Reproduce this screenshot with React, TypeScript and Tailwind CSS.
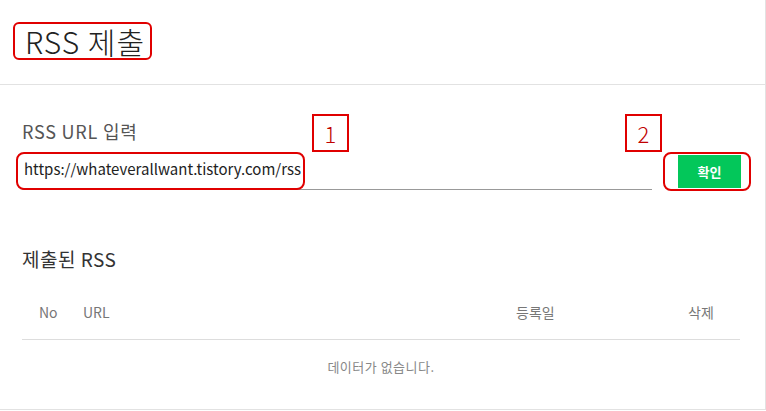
import React from 'react'

const font = "font-['Noto_Sans_CJK_KR','Noto_Sans',sans-serif]"

function Marker({ n, className }: { n: string; className: string }) {
  return (
    <div className={`absolute w-[37px] h-[38px] border-2 border-[#e00000] flex items-center justify-center text-[22px] font-light text-[#c00000] ${className}`}>
      {n}
    </div>
  )
}

export default function App() {
  return (
    <div className={`w-[766px] h-[411px] bg-white ${font}`}>
      <div className="relative h-[410px] border-r border-b border-[#e2e2e2]">
        {/* header */}
        <div className="h-[85px] border-b border-[#e2e2e2] pl-[13px] pt-[22px]">
          <span className="inline-flex items-center h-[38px] pl-[10px] pr-[5px] border-2 border-[#e00000] rounded-[6px] text-[30px] font-light text-[#222] tracking-[1px]">
            RSS 제출
          </span>
        </div>

        {/* form */}
        <div className="px-[22px] pt-[33px]">
          <div className="text-[18px] text-[#555] leading-[26px] tracking-[0.8px]">RSS URL 입력</div>
          <div className="flex items-end mt-[8px]">
            <div className="shrink-0 w-[630px] h-[32px] border-b border-[#999] relative">
              <span className="absolute -left-[6px] -top-[6px] h-[38px] w-[289px] border-2 border-[#e00000] rounded-[8px]" />
              <span className="absolute left-[2px] top-[1px] text-[15px] text-[#222] leading-[20px]">
                https://whateverallwant.tistory.com/rss
              </span>
            </div>
            <div className="shrink-0 ml-[11px] -mb-[1px] border-2 border-[#e00000] rounded-[8px] pl-[13px] pr-[8px] py-[1px]">
              <button className="block w-[63px] h-[33px] bg-[#03c75a] text-white text-[13px] font-bold">확인</button>
            </div>
          </div>
        </div>

        {/* list */}
        <div className="pl-[22px] pr-[25px] pt-[56px]">
          <div className="text-[19px] text-[#333] leading-[26px] tracking-[0.5px]">제출된 RSS</div>
          <div className="mt-[14px] flex items-center h-[54px] border-b border-[#dddddd] text-[14px] text-[#777]">
            <span className="w-[61px] pl-[17px]">No</span>
            <span className="flex-1">URL</span>
            <span className="w-[172px]">등록일</span>
            <span className="w-[52px]">삭제</span>
          </div>
          <div className="h-[54px] flex items-center justify-center text-[13px] text-[#888] tracking-[0.5px]">데이터가 없습니다.</div>
        </div>

        <Marker n="1" className="left-[312px] top-[114px]" />
        <Marker n="2" className="left-[625px] top-[114px]" />
      </div>
    </div>
  )
}
